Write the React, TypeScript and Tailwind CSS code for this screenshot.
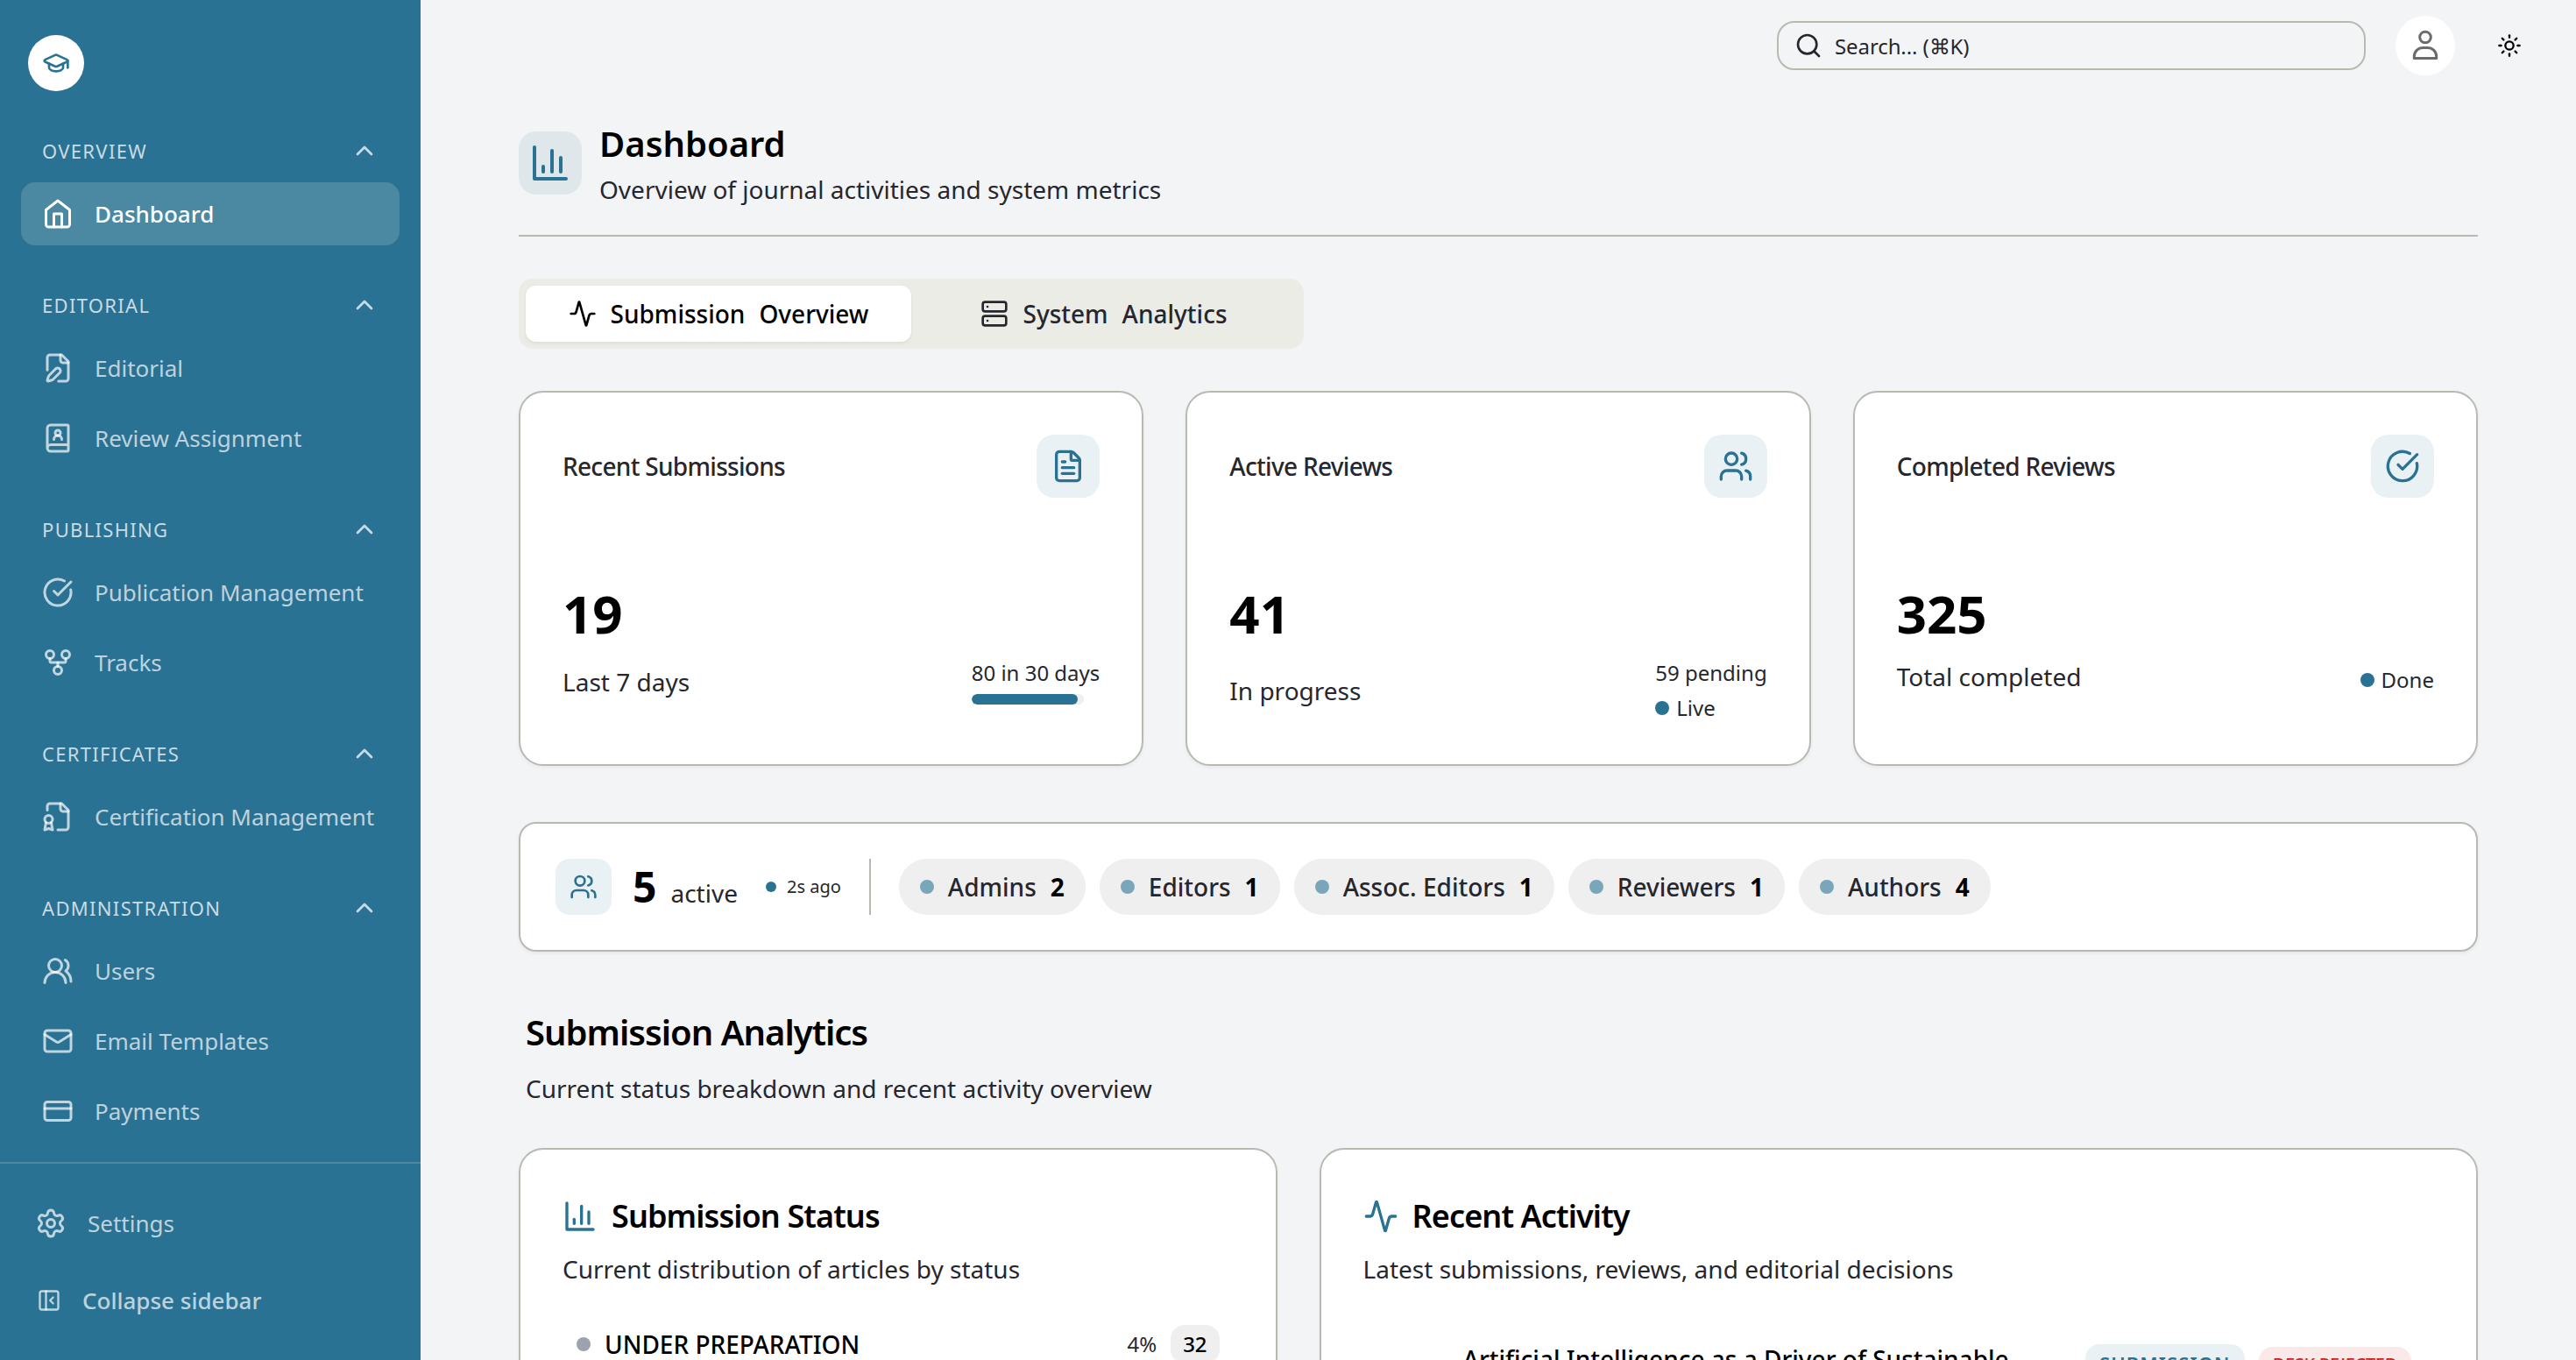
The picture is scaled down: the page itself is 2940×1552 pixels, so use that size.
import type { ReactNode } from "react";
import {
  Activity,
  BookUser,
  ChevronUp,
  CircleCheckBig,
  FileText,
  GraduationCap,
  PanelLeftClose,
  Search,
  Server,
  Sun,
  Users,
} from "lucide-react";

type IconProps = { className?: string; strokeWidth?: number };

function Svg({ className, children, strokeWidth = 2 }: IconProps & { children: ReactNode }) {
  return (
    <svg
      viewBox="0 0 24 24"
      fill="none"
      stroke="currentColor"
      strokeWidth={strokeWidth}
      strokeLinecap="round"
      strokeLinejoin="round"
      className={className}
    >
      {children}
    </svg>
  );
}

function BarChart(props: IconProps) {
  return (
    <Svg {...props}>
      <path d="M3 3v18h18" />
      <path d="M18 17V9" />
      <path d="M13 17V5" />
      <path d="M8 17v-3" />
    </Svg>
  );
}

function HomeIcon(props: IconProps) {
  return (
    <Svg {...props}>
      <path d="m3 9 9-7 9 7v11a2 2 0 0 1-2 2H5a2 2 0 0 1-2-2z" />
      <path d="M9 22V12h6v10" />
    </Svg>
  );
}

function FilePenIcon(props: IconProps) {
  return (
    <Svg {...props}>
      <path d="M12.500 22H18a2 2 0 0 0 2-2V7l-5-5H6a2 2 0 0 0-2 2v9.500" />
      <path d="M14 2v4a2 2 0 0 0 2 2h4" />
      <path d="M13.378 15.626a1 1 0 1 0-3.004-3.004l-5.010 5.012a2 2 0 0 0-.506.854l-.837 2.870a.5.5 0 0 0 .620.620l2.870-.837a2 2 0 0 0 .854-.506z" />
    </Svg>
  );
}

function FileBadgeIcon(props: IconProps) {
  return (
    <Svg {...props}>
      <path d="M12 22h6a2 2 0 0 0 2-2V7l-5-5H6a2 2 0 0 0-2 2v3" />
      <path d="M14 2v4a2 2 0 0 0 2 2h4" />
      <circle cx="5" cy="14" r="3" />
      <path d="M7 16.500 8 22l-3-1-3 1 1-5.500" />
    </Svg>
  );
}

function ForkIcon(props: IconProps) {
  return (
    <Svg {...props}>
      <circle cx="12" cy="18" r="3" />
      <circle cx="6" cy="6" r="3" />
      <circle cx="18" cy="6" r="3" />
      <path d="M18 9v2c0 .6-.4 1-1 1H7c-.6 0-1-.4-1-1V9" />
      <path d="M12 12v3" />
    </Svg>
  );
}

function UsersRoundIcon(props: IconProps) {
  return (
    <Svg {...props}>
      <path d="M18 21a8 8 0 0 0-16 0" />
      <circle cx="10" cy="8" r="5" />
      <path d="M22 20c0-3.370-2-6.500-4-8a5 5 0 0 0-.45-8.300" />
    </Svg>
  );
}

function MailIcon(props: IconProps) {
  return (
    <Svg {...props}>
      <rect x="2" y="4" width="20" height="16" rx="2" />
      <path d="m22 7-8.970 5.700a1.940 1.940 0 0 1-2.060 0L2 7" />
    </Svg>
  );
}

function CardIcon(props: IconProps) {
  return (
    <Svg {...props}>
      <rect x="2" y="5" width="20" height="14" rx="2" />
      <path d="M2 10h20" />
    </Svg>
  );
}

function GearIcon(props: IconProps) {
  return (
    <Svg {...props}>
      <path d="M9.671 4.136a2.340 2.340 0 0 1 4.659 0 2.340 2.340 0 0 0 3.319 1.915 2.340 2.340 0 0 1 2.330 4.033 2.340 2.340 0 0 0 0 3.831 2.340 2.340 0 0 1-2.330 4.033 2.340 2.340 0 0 0-3.319 1.915 2.340 2.340 0 0 1-4.659 0 2.340 2.340 0 0 0-3.320-1.915 2.340 2.340 0 0 1-2.330-4.033 2.340 2.340 0 0 0 0-3.831A2.340 2.340 0 0 1 6.350 6.051a2.340 2.340 0 0 0 3.319-1.915" />
      <circle cx="12" cy="12" r="3" />
    </Svg>
  );
}

function PersonIcon({ className }: IconProps) {
  return (
    <svg viewBox="0 0 32 36" fill="none" stroke="currentColor" strokeWidth="3" className={className}>
      <circle cx="16" cy="8.500" r="6.300" />
      <path d="M3.300 32.500v-2a10 10 0 0 1 10-10h5.400a10 10 0 0 1 10 10v2Z" strokeLinejoin="round" />
    </svg>
  );
}

type NavEntry = { label: string; icon: ReactNode; active?: boolean };
const nav: { title: string; items: NavEntry[] }[] = [
  { title: "OVERVIEW", items: [{ label: "Dashboard", icon: <HomeIcon className="size-9 shrink-0" />, active: true }] },
  {
    title: "EDITORIAL",
    items: [
      { label: "Editorial", icon: <FilePenIcon className="size-9 shrink-0" /> },
      { label: "Review Assignment", icon: <BookUser className="size-9 shrink-0" /> },
    ],
  },
  {
    title: "PUBLISHING",
    items: [
      { label: "Publication Management", icon: <CircleCheckBig className="size-9 shrink-0" /> },
      { label: "Tracks", icon: <ForkIcon className="size-9 shrink-0" /> },
    ],
  },
  {
    title: "CERTIFICATES",
    items: [{ label: "Certification Management", icon: <FileBadgeIcon className="size-9 shrink-0" /> }],
  },
  {
    title: "ADMINISTRATION",
    items: [
      { label: "Users", icon: <UsersRoundIcon className="size-9 shrink-0" /> },
      { label: "Email Templates", icon: <MailIcon className="size-9 shrink-0" /> },
      { label: "Payments", icon: <CardIcon className="size-9 shrink-0" /> },
    ],
  },
];

function Sidebar() {
  return (
    <aside className="flex w-[480px] shrink-0 flex-col bg-[#2a7293]">
      <div className="px-8 pt-10">
        <div className="flex size-16 items-center justify-center rounded-full bg-white text-[#2a7293]">
          <GraduationCap className="size-8" />
        </div>
      </div>
      <nav className="mt-[34px] flex flex-1 flex-col gap-[34px] px-6">
        {nav.map((section) => (
          <div key={section.title}>
            <div className="flex h-[70px] items-center justify-between px-6 pb-0.5 text-white/75">
              <span className="text-[22px] leading-8 tracking-[1.32px]">{section.title}</span>
              <ChevronUp className="size-8" />
            </div>
            <div className="flex flex-col gap-2">
              {section.items.map((item) => (
                <div
                  key={item.label}
                  className={
                    item.active
                      ? "flex h-[72px] items-center gap-6 rounded-2xl bg-[#4b88a2] px-6 text-[26px] font-medium text-white"
                      : "flex h-[72px] items-center gap-6 rounded-2xl px-6 text-[26px] text-white/70"
                  }
                >
                  {item.icon}
                  <span className="whitespace-nowrap">{item.label}</span>
                </div>
              ))}
            </div>
          </div>
        ))}
      </nav>
      <div className="flex h-[226px] flex-col border-t-2 border-[#4b88a2] pt-8 text-[26px] text-white/70">
        <div className="flex h-[72px] items-center gap-6 px-10">
          <GearIcon className="size-9" />
          <span>Settings</span>
        </div>
        <div className="mt-4 flex h-[72px] items-center gap-6 pl-[42px] font-medium">
          <PanelLeftClose className="size-7" />
          <span>Collapse sidebar</span>
        </div>
      </div>
    </aside>
  );
}

function Header() {
  return (
    <header className="flex h-[104px] shrink-0 items-center justify-end pr-[62px]">
      <div className="flex h-14 w-[672px] items-center gap-3.5 rounded-[20px] border-2 border-[#b8bab2] px-[18px] text-2xl text-[#26272e]">
        <Search className="size-8" />
        <span className="pt-0.5 tracking-[-0.1px]">Search... (⌘K)</span>
      </div>
      <div className="ml-[34px] flex size-[68px] items-center justify-center rounded-full bg-white text-[#6b6b6b]">
        <PersonIcon className="h-9 w-8" />
      </div>
      <Sun className="ml-12 size-7 text-black" />
    </header>
  );
}

function StatCard({
  title,
  icon,
  value,
  note,
  children,
}: {
  title: string;
  icon: ReactNode;
  value: string;
  note: string;
  children: ReactNode;
}) {
  return (
    <div className="rounded-[28px] border-2 border-[#b8bab2] bg-white p-12 shadow-[0_2px_4px_rgba(0,0,0,0.05)]">
      <div className="flex h-[72px] items-center justify-between">
        <span className="text-[28px] font-medium tracking-[-0.7px] text-[#26272e]">{title}</span>
        <div className="flex size-[72px] items-center justify-center rounded-[20px] bg-[#e9f1f4] text-[#2a7293]">{icon}</div>
      </div>
      <div className="mt-24 text-6xl leading-[72px] font-bold text-black">{value}</div>
      <div className="mt-4 flex items-center justify-between text-[#26272e]">
        <span className="text-[28px] leading-10">{note}</span>
        {children}
      </div>
    </div>
  );
}

function StatusDot({ label }: { label: string }) {
  return (
    <div className="mt-2 flex items-center gap-2">
      <span className="size-4 rounded-full bg-[#2a7293]" />
      <span>{label}</span>
    </div>
  );
}

const roles = [
  ["Admins", "2"],
  ["Editors", "1"],
  ["Assoc. Editors", "1"],
  ["Reviewers", "1"],
  ["Authors", "4"],
];

export default function App() {
  return (
    <div className="flex h-[1552px] w-[2940px] overflow-hidden bg-[#f3f4f6] font-['Noto_Sans',sans-serif]">
      <Sidebar />
      <main className="flex min-w-0 flex-1 flex-col">
        <Header />
        <div className="shrink-0 px-28 pt-9">
          <div className="flex h-[130px] items-start gap-5 border-b-2 border-[#b8bab2]">
            <div className="mt-2.5 flex size-[72px] items-center justify-center rounded-[20px] bg-[#dfe7eb] text-[#2a7293]">
              <BarChart className="size-12" />
            </div>
            <div className="flex flex-col gap-2">
              <h1 className="text-[40px] leading-[48px] font-semibold text-black">Dashboard</h1>
              <p className="text-[28px] leading-10 text-[#26272e]">Overview of journal activities and system metrics</p>
            </div>
          </div>

          <div className="mt-12 grid h-20 w-[896px] grid-cols-2 rounded-2xl bg-[#ebece6] p-2 text-[28px] leading-10 font-medium text-[#26272e]">
            <div className="flex items-center justify-center gap-4 rounded-xl bg-white text-black shadow-[0_2px_4px_rgba(0,0,0,0.06)]">
              <Activity className="size-8" />
              <span>Submission</span>
              <span>Overview</span>
            </div>
            <div className="flex items-center justify-center gap-4">
              <Server className="size-8" />
              <span>System</span>
              <span>Analytics</span>
            </div>
          </div>

          <div className="mt-12 grid grid-cols-3 gap-12">
            <StatCard title="Recent Submissions" icon={<FileText className="size-10" />} value="19" note="Last 7 days">
              <div className="text-2xl leading-8">
                <div>80 in 30 days</div>
                <div className="mt-2 h-3 w-32 overflow-hidden rounded-full bg-[#efefef]">
                  <div className="h-full w-[121px] rounded-full bg-[#2a7293]" />
                </div>
              </div>
            </StatCard>
            <StatCard title="Active Reviews" icon={<Users className="size-10" />} value="41" note="In progress">
              <div className="text-2xl leading-8">
                <div>59 pending</div>
                <StatusDot label="Live" />
              </div>
            </StatCard>
            <StatCard title="Completed Reviews" icon={<CircleCheckBig className="size-10" />} value="325" note="Total completed">
              <div className="text-2xl leading-8">
                <StatusDot label="Done" />
              </div>
            </StatCard>
          </div>

          <div className="mt-16 flex h-[148px] items-center rounded-[20px] border-2 border-[#b8bab2] bg-white px-10 text-[#26272e] shadow-[0_2px_4px_rgba(0,0,0,0.06)]">
            <div className="flex size-16 items-center justify-center rounded-2xl bg-[#e9f1f4] text-[#2a7293]">
              <Users className="size-8" />
            </div>
            <div className="ml-6 flex items-baseline gap-4">
              <span className="text-5xl leading-[64px] font-bold text-black">5</span>
              <span className="text-[28px]">active</span>
            </div>
            <div className="ml-8 flex items-center gap-3">
              <span className="size-3 rounded-full bg-[#2a7293]" />
              <span className="text-xl">2s ago</span>
            </div>
            <div className="ml-8 h-16 w-0.5 bg-[#b8bab2]" />
            <div className="ml-8 flex gap-4">
              {roles.map(([name, count]) => (
                <div
                  key={name}
                  className="flex h-16 items-center gap-4 rounded-full bg-[#efefef] px-6 text-[28px] leading-10 font-medium"
                >
                  <span className="size-4 rounded-full bg-[#7aa6b9]" />
                  <span>{name}</span>
                  <span className="font-bold text-black">{count}</span>
                </div>
              ))}
            </div>
          </div>

          <div className="mt-16 px-2">
            <h2 className="text-[40px] leading-[56px] font-semibold tracking-[-1px] text-black">Submission Analytics</h2>
            <p className="mt-4 text-[28px] leading-10 text-[#26272e]">Current status breakdown and recent activity overview</p>
          </div>

          <div className="mt-12 grid h-[600px] grid-cols-5 gap-12">
            <div className="col-span-2 rounded-[28px] border-2 border-[#b8bab2] bg-white p-12 shadow-[0_2px_4px_rgba(0,0,0,0.05)]">
              <div className="flex items-center gap-4">
                <BarChart className="size-10 text-[#2a7293]" />
                <h3 className="text-4xl leading-[56px] font-semibold tracking-[-0.9px] text-black">Submission Status</h3>
              </div>
              <p className="mt-3 text-[28px] leading-10 text-[#26272e]">Current distribution of articles by status</p>
              <div className="mt-11 flex h-11 items-center px-4">
                <span className="size-4 rounded-full bg-[#9ca3af]" />
                <span className="ml-4 text-[28px] font-medium text-black">UNDER PREPARATION</span>
                <span className="ml-auto text-2xl text-[#26272e]">4%</span>
                <span className="ml-4 flex h-11 items-center rounded-2xl bg-[#efefef] px-3.5 text-2xl font-medium text-black">32</span>
              </div>
            </div>
            <div className="col-span-3 rounded-[28px] border-2 border-[#b8bab2] bg-white p-12 shadow-[0_2px_4px_rgba(0,0,0,0.05)]">
              <div className="flex items-center gap-4">
                <Activity className="size-10 text-[#2a7293]" />
                <h3 className="text-4xl leading-[56px] font-semibold tracking-[-0.9px] text-black">Recent Activity</h3>
              </div>
              <p className="mt-3 text-[28px] leading-10 text-[#26272e]">Latest submissions, reviews, and editorial decisions</p>
              <div className="mt-[63px] flex items-start pr-[26px] pl-[114px]">
                <span className="text-[28px] leading-10 font-medium text-black">
                  Artificial Intelligence as a Driver of Sustainable
                </span>
                <span className="mt-[3px] ml-auto rounded-2xl bg-[#e9f1f4] px-4 pt-1.5 pb-2 text-[22px] leading-8 font-semibold tracking-[1.1px] text-[#2a7293]">
                  SUBMISSION
                </span>
                <span className="mt-[6px] ml-4 rounded-2xl bg-[#fbe9e9] px-4 py-1 text-[20px] leading-8 font-medium tracking-[-0.3px] text-[#c62828]">
                  DESK REJECTED
                </span>
              </div>
            </div>
          </div>
        </div>
      </main>
    </div>
  );
}
